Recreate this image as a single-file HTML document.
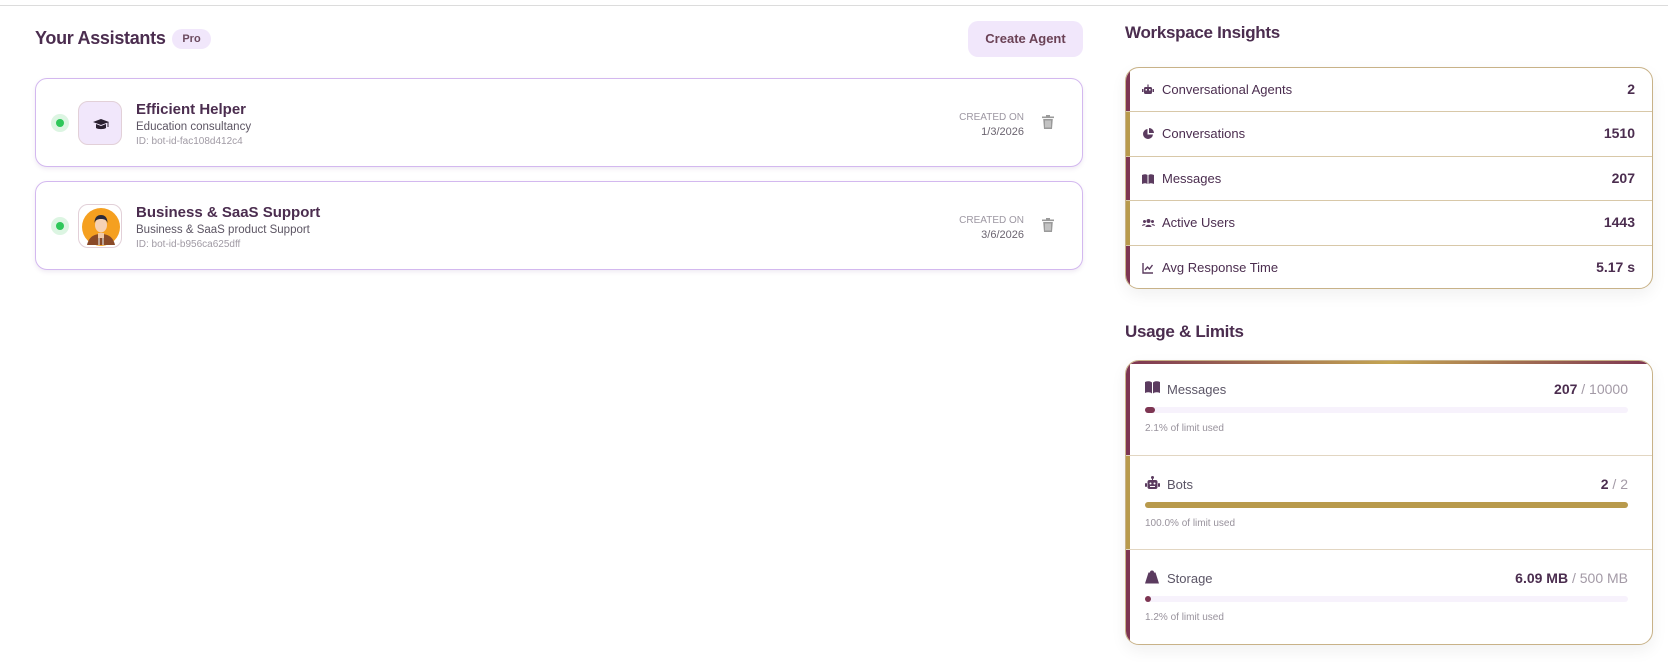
<!DOCTYPE html>
<html><head><meta charset="utf-8"><style>
*{box-sizing:border-box;margin:0;padding:0}
body{width:1668px;height:662px;background:#fff;font-family:"Liberation Sans",sans-serif;color:#4b2d4f;position:relative;overflow:hidden}
.topline{position:absolute;left:0;right:0;top:5px;height:1px;background:#dcdcdc}
.h{position:absolute;font-weight:bold;font-size:18px;color:#4b2d4f;letter-spacing:-0.3px}
.pro{position:absolute;left:172px;top:29px;width:39px;height:20px;border-radius:10px;background:#f1e7fb;font-size:11px;font-weight:bold;color:#6b4a5e;text-align:center;line-height:20px}
.btn{position:absolute;left:968px;top:21px;width:115px;height:36px;border-radius:10px;background:#f1e7fb;font-size:13px;font-weight:bold;color:#6b4256;text-align:center;line-height:36px}
.card{position:absolute;left:35px;width:1048px;height:89px;border:1px solid #d3b8ef;border-radius:12px;background:#fff;box-shadow:0 2px 4px rgba(120,80,160,0.12)}
.dot{position:absolute;left:15px;top:35px;width:18px;height:18px;border-radius:50%;background:#dcf5e2}
.dot:after{content:"";position:absolute;left:5px;top:5px;width:8px;height:8px;border-radius:50%;background:#2fc75a}
.av{position:absolute;left:42px;top:22px;width:44px;height:44px;border-radius:10px;border:1px solid #e2d0d8;background:#f1e7fb;overflow:hidden}
.nm{position:absolute;left:100px;top:22px;font-size:15px;font-weight:bold;color:#4b2d4f}
.sb{position:absolute;left:100px;top:42px;font-size:11.5px;color:#5c5563}
.id{position:absolute;left:100px;top:57px;font-size:10px;color:#a09aa4}
.cr{position:absolute;right:58px;top:31px;text-align:right;font-size:10px;color:#9d97a2;line-height:15px}
.cr b{font-weight:normal;color:#6b6470;font-size:11px}
.tr{position:absolute;right:28px;top:36px}
.box{position:absolute;left:1125px;width:528px;background:#fff;border:1px solid #c8b288;border-radius:14px;overflow:hidden;box-shadow:0 6px 16px rgba(0,0,0,0.06)}
.row{height:44.4px;border-bottom:1px solid #d8c8a8;position:relative;font-size:13px;color:#4b2d4f}
.row:last-child{border-bottom:none}
.row .bar{position:absolute;left:0;top:0;bottom:0;width:4px}
.row svg{position:absolute;left:16px;top:16px}
.row .l{position:absolute;left:36px;top:14px}
.row .v{position:absolute;right:17px;top:13px;font-weight:bold;font-size:14px}
.m{background:#7d3552}.g{background:#b89a4c}
.sec{height:94.5px;border-bottom:1px solid #e2d6c2;position:relative}
.sec:last-child{border-bottom:none}
.sec .bar{position:absolute;left:0;top:0;bottom:0;width:4px}
.sec svg{position:absolute;left:19px;top:20px}
.sec .l{position:absolute;left:41px;top:21px;font-size:13px;color:#5b5566}
.sec .v{position:absolute;right:24px;top:20px;font-size:14px;font-weight:bold;color:#4b2d4f}
.sec .v span{color:#a39aa6;font-weight:normal}
.trk{position:absolute;left:19px;right:24px;top:46px;height:6px;border-radius:3px;background:#f7f2fc}
.trk i{display:block;height:6px;border-radius:3px}
.cap{position:absolute;left:19px;top:62px;font-size:10px;color:#98929c}
</style></head><body>
<div class="topline"></div>
<div class="h" style="left:35px;top:28px">Your Assistants</div>
<div class="pro">Pro</div>
<div class="btn">Create Agent</div>

<div class="card" style="top:78px">
 <div class="dot"></div>
 <div class="av"><svg width="44" height="44" viewBox="0 0 44 44"><path d="M14 20l8-3 8 3-8 3z M17 22v4c2 1.5 8 1.5 10 0v-4l-5 2z" fill="#2a2030"/><path d="M29 20v5" stroke="#2a2030" stroke-width="1"/></svg></div>
 <div class="nm">Efficient Helper</div>
 <div class="sb">Education consultancy</div>
 <div class="id">ID: bot-id-fac108d412c4</div>
 <div class="cr">CREATED ON<br><b>1/3/2026</b></div>
 <svg class="tr" width="12" height="14" viewBox="0 0 12 14"><rect x="0" y="1.5" width="12" height="1.6" fill="#9a9a9a"/><rect x="4" y="0" width="4" height="2" fill="#9a9a9a"/><path d="M1.2 4h9.6l-.8 10H2z" fill="#9a9a9a"/><path d="M4 5.5v7M6 5.5v7M8 5.5v7" stroke="#fff" stroke-width=".8"/></svg>
</div>

<div class="card" style="top:181px">
 <div class="dot"></div>
 <div class="av" style="background:#fff"><svg width="44" height="44" viewBox="0 0 44 44"><circle cx="22" cy="22" r="19" fill="#f5a020"/><path d="M8 40c2-9 8-11 14-11s12 2 14 11z" fill="#8a4a28"/><path d="M19 28h6v5h-6z" fill="#f0c8a8"/><ellipse cx="22" cy="20" rx="6" ry="7.5" fill="#f6d2b5"/><path d="M15.5 18c0-6 3-8 6.5-8s6.5 2 6.5 8c-1-3-3-4-6.5-4s-5.5 1-6.5 4z" fill="#2b2a3a"/><path d="M20 33v7M24 33v7" stroke="#ddd" stroke-width="1.2"/></svg></div>
 <div class="nm">Business &amp; SaaS Support</div>
 <div class="sb">Business &amp; SaaS product Support</div>
 <div class="id">ID: bot-id-b956ca625dff</div>
 <div class="cr">CREATED ON<br><b>3/6/2026</b></div>
 <svg class="tr" width="12" height="14" viewBox="0 0 12 14"><rect x="0" y="1.5" width="12" height="1.6" fill="#9a9a9a"/><rect x="4" y="0" width="4" height="2" fill="#9a9a9a"/><path d="M1.2 4h9.6l-.8 10H2z" fill="#9a9a9a"/><path d="M4 5.5v7M6 5.5v7M8 5.5v7" stroke="#fff" stroke-width=".8"/></svg>
</div>

<div class="h" style="left:1125px;top:23px;font-size:17px">Workspace Insights</div>
<div class="box" style="top:67px;height:222px">
 <div class="row"><div class="bar m"></div><svg width="12" height="12" viewBox="0 0 12 12"><rect x="2" y="3" width="8" height="7" rx="1.5" fill="#5b3b5f"/><rect x="0" y="5" width="1.5" height="3" fill="#5b3b5f"/><rect x="10.5" y="5" width="1.5" height="3" fill="#5b3b5f"/><rect x="5.4" y="0.5" width="1.2" height="2.5" fill="#5b3b5f"/><rect x="3.5" y="5" width="1.5" height="1.5" fill="#fff"/><rect x="7" y="5" width="1.5" height="1.5" fill="#fff"/></svg><span class="l">Conversational Agents</span><span class="v">2</span></div>
 <div class="row"><div class="bar g"></div><svg width="12" height="12" viewBox="0 0 12 12"><path d="M5.5 1A5 5 0 1 0 11 6.5H5.5z" fill="#5b3b5f"/><path d="M7 0v5h5A5 5 0 0 0 7 0z" fill="#5b3b5f"/></svg><span class="l">Conversations</span><span class="v">1510</span></div>
 <div class="row"><div class="bar m"></div><svg width="12" height="12" viewBox="0 0 12 12"><path d="M0 2c2-1 4-1 5.5 0v9c-1.5-1-3.5-1-5.5 0z M6.5 2c1.5-1 3.5-1 5.5 0v9c-2-1-4-1-5.5 0z" fill="#5b3b5f"/></svg><span class="l">Messages</span><span class="v">207</span></div>
 <div class="row"><div class="bar g"></div><svg width="13" height="12" viewBox="0 0 13 12"><circle cx="6.5" cy="4" r="2" fill="#5b3b5f"/><circle cx="2.5" cy="4.5" r="1.5" fill="#5b3b5f"/><circle cx="10.5" cy="4.5" r="1.5" fill="#5b3b5f"/><path d="M3.5 10c0-3 6-3 6 0z M0 9c0-2 3.5-2.5 3.5-1z M13 9c0-2-3.5-2.5-3.5-1z" fill="#5b3b5f"/></svg><span class="l">Active Users</span><span class="v">1443</span></div>
 <div class="row"><div class="bar m"></div><svg width="12" height="12" viewBox="0 0 12 12"><path d="M1 1v10h10" stroke="#5b3b5f" stroke-width="1.4" fill="none"/><path d="M3 8l2.5-3 2 2L10.5 3" stroke="#5b3b5f" stroke-width="1.4" fill="none"/></svg><span class="l">Avg Response Time</span><span class="v">5.17 s</span></div>
</div>

<div class="h" style="left:1125px;top:322px;font-size:17px">Usage &amp; Limits</div>
<div class="box" style="top:360px;height:285px">
 <div style="position:absolute;left:0;right:0;top:0;height:3px;background:linear-gradient(90deg,#7d3552,#c4a552 50%,#7d3552);z-index:2"></div>
 <div class="sec"><div class="bar m"></div><svg width="15" height="13" viewBox="0 0 15 13"><path d="M0 1c2.5-1 5-1 7 0.5v11C5 11 2.5 11 0 12z M8 1.5c2-1.5 4.5-1.5 7-0.5v11c-2.5-1-5-1-7 .5z" fill="#5b3b5f"/></svg><span class="l">Messages</span><span class="v">207 <span>/ 10000</span></span><div class="trk"><i class="m" style="width:10px"></i></div><div class="cap">2.1% of limit used</div></div>
 <div class="sec"><div class="bar g"></div><svg width="15" height="14" viewBox="0 0 15 14"><rect x="2.5" y="4" width="10" height="9" rx="2" fill="#5b3b5f"/><rect x="0" y="7" width="2" height="4" rx="1" fill="#5b3b5f"/><rect x="13" y="7" width="2" height="4" rx="1" fill="#5b3b5f"/><circle cx="7.5" cy="1.5" r="1.5" fill="#5b3b5f"/><rect x="7" y="2" width="1" height="2" fill="#5b3b5f"/><circle cx="5.5" cy="7.5" r="1" fill="#fff"/><circle cx="9.5" cy="7.5" r="1" fill="#fff"/><rect x="5" y="10" width="5" height="1" fill="#fff"/></svg><span class="l">Bots</span><span class="v">2 <span>/ 2</span></span><div class="trk"><i class="g" style="width:100%"></i></div><div class="cap">100.0% of limit used</div></div>
 <div class="sec"><div class="bar m"></div><svg width="14" height="14" viewBox="0 0 14 14"><path d="M7 0.5a2 2 0 0 1 2 2h1.5L14 13.5H0L3.5 2.5H5a2 2 0 0 1 2-2z" fill="#5b3b5f"/></svg><span class="l">Storage</span><span class="v">6.09 MB <span>/ 500 MB</span></span><div class="trk"><i class="m" style="width:6px"></i></div><div class="cap">1.2% of limit used</div></div>
</div>
</body></html>
